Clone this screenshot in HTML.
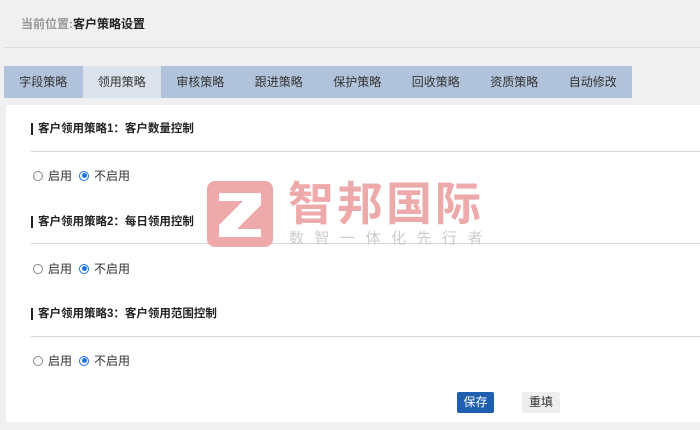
<!DOCTYPE html>
<html><head><meta charset="utf-8"><style>
*{margin:0;padding:0;box-sizing:border-box}
body{width:700px;height:430px;background:#f0f0f0;font-family:"Liberation Sans","Noto Sans CJK SC",sans-serif;font-size:12px;color:#333;position:relative;overflow:hidden}
.abs{position:absolute}
.hdr{left:21px;top:15px;font-size:12px;font-weight:bold;color:#222}
.hdr span{color:#999}
.div{left:4px;top:47px;width:696px;height:1px;background:#ddd}
.tabs{left:4px;top:66px;height:32px;width:628px;background:#b1c3da;display:flex}
.tabs div{width:78.5px;text-align:center;line-height:32px;color:#333;font-size:12px}
.tabs .on{background:#dbe2ec}
.panel{left:6px;top:105px;width:694px;height:317px;background:#fff}
.ttl{left:31px;font-weight:bold;color:#222;font-size:11.5px;border-left:2px solid #222;padding-left:5px;line-height:12px}
.ln{left:31px;width:669px;height:1px;background:#d6d6d6}
.rad{left:33px;display:flex;align-items:center;font-size:12px;color:#333}
.r{width:10px;height:10px;border:1px solid #888;border-radius:50%;margin-right:5px;display:inline-block;position:relative}
.r.on{border-color:#1a73e8}
.r.on::after{content:"";position:absolute;left:1.5px;top:1.5px;width:5px;height:5px;border-radius:50%;background:#1a73e8}
.g{width:7px;display:inline-block}
.btn{top:392px;height:21px;line-height:21px;text-align:center;font-size:12px;border-radius:2px}
</style></head><body>
<div class="abs hdr"><span>当前位置:</span>客户策略设置</div>
<div class="abs div"></div>
<div class="abs tabs"><div>字段策略</div><div class="on">领用策略</div><div>审核策略</div><div>跟进策略</div><div>保护策略</div><div>回收策略</div><div>资质策略</div><div>自动修改</div></div>
<div class="abs panel"></div>
<div class="abs ttl" style="top:123px">客户领用策略1：客户数量控制</div>
<div class="abs ln" style="top:151px"></div>
<div class="abs rad" style="top:167px"><i class="r"></i>启用<i class="g"></i><i class="r on"></i>不启用</div>
<div class="abs ttl" style="top:216px">客户领用策略2：每日领用控制</div>
<div class="abs ln" style="top:243px"></div>
<div class="abs rad" style="top:260px"><i class="r"></i>启用<i class="g"></i><i class="r on"></i>不启用</div>
<div class="abs ttl" style="top:308px">客户领用策略3：客户领用范围控制</div>
<div class="abs ln" style="top:336px"></div>
<div class="abs rad" style="top:352px"><i class="r"></i>启用<i class="g"></i><i class="r on"></i>不启用</div>
<svg class="abs" style="left:207px;top:181px" width="66" height="66" viewBox="0 0 66 66"><rect width="66" height="66" rx="8" fill="#eeaaab"/><path d="M12 12H54V24L30 48H54V56H12V44L36 20H12Z" fill="#fff"/></svg>
<div class="abs" style="left:288px;top:176px;font-size:46px;color:#eeaaab;font-weight:bold;letter-spacing:3px;line-height:56px">智邦国际</div>
<div class="abs" style="left:289px;top:230px;font-size:15px;color:#ccc;letter-spacing:10.5px;line-height:18px">数智一体化先行者</div>
<div class="abs btn" style="left:457px;width:37px;background:#1f5fb0;color:#fff">保存</div>
<div class="abs btn" style="left:522px;width:38px;background:#eee;color:#333">重填</div>
</body></html>
